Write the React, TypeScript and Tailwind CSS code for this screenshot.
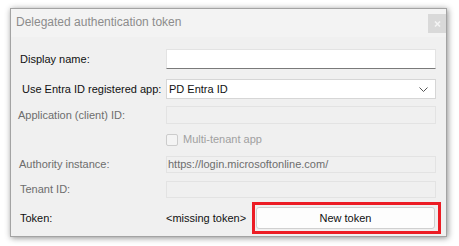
export default function App() {
  const font = { fontFamily: '"Liberation Sans", Arial, sans-serif' };
  return (
    <div className="w-[459px] h-[246px] bg-white pt-[8px] pl-[10px]" style={font}>
      <div className="w-[437px] h-[229px] border border-[#a3a3a3] bg-[#f0f0f0] shadow-[1px_1px_6px_rgba(0,0,0,0.45)] flex flex-col">
        {/* title bar */}
        <div className="h-[28px] bg-[#f3f3f3] flex items-start justify-between">
          <span className="pl-[5px] pt-[6px] text-[12px] leading-[14px] text-[#8c8c8c]">
            Delegated authentication token
          </span>
          <div className="mt-[5px] w-[18px] h-[19px] bg-[#d9d9d9] flex items-center justify-center">
            <svg width="7" height="6" viewBox="0 0 7 6">
              <path d="M1 0.5 L6 5.5 M6 0.5 L1 5.5" stroke="#f4f4f4" strokeWidth="1.6" />
            </svg>
          </div>
        </div>

        <div className="flex flex-col text-[11px] leading-[13px]">
          {/* display name */}
          <div className="mt-[12px] h-[20px] flex items-center">
            <span className="w-[155px] pl-[9px] text-[#111]">Display name:</span>
            <div className="w-[270px] h-[20px] bg-white border border-[#e3e3e3] border-b-[#7a7a7a]" />
          </div>
          {/* entra app */}
          <div className="mt-[10px] h-[20px] flex items-center">
            <span className="w-[155px] pl-[11px] text-[#111]">Use Entra ID registered app:</span>
            <div className="w-[270px] h-[20px] bg-white border border-[#d6d6d6] flex items-center justify-between pl-[2px] pr-[7px]">
              <span className="text-[#111]">PD Entra ID</span>
              <svg width="9" height="5" viewBox="0 0 9 5">
                <path d="M0.5 0.5 L4.5 4.5 L8.5 0.5" fill="none" stroke="#555" strokeWidth="1" />
              </svg>
            </div>
          </div>
          {/* application id */}
          <div className="mt-[7px] h-[18px] flex items-center">
            <span className="w-[155px] pl-[7px] text-[#6d6d6d]">Application (client) ID:</span>
            <div className="w-[270px] h-[18px] bg-[#f0f0f0] border border-[#e3e3e3]" />
          </div>
          {/* multi-tenant */}
          <div className="mt-[9px] h-[13px] flex items-center">
            <div className="ml-[155px] w-[12px] h-[12px] rounded-[2px] border border-[#cccccc] bg-[#f4f4f4]" />
            <span className="ml-[5px] text-[#a0a0a0]">Multi-tenant app</span>
          </div>
          {/* authority */}
          <div className="mt-[10px] h-[17px] flex items-center">
            <span className="w-[155px] pl-[8px] text-[#6d6d6d]">Authority instance:</span>
            <div className="w-[270px] h-[17px] bg-[#f0f0f0] border border-[#e3e3e3] flex items-center pl-[1px]">
              <span className="text-[#6d6d6d]">https://login.microsoftonline.com/</span>
            </div>
          </div>
          {/* tenant */}
          <div className="mt-[8px] h-[17px] flex items-center">
            <span className="w-[155px] pl-[9px] text-[#6d6d6d]">Tenant ID:</span>
            <div className="w-[270px] h-[17px] bg-[#f0f0f0] border border-[#e3e3e3]" />
          </div>
          {/* token */}
          <div className="mt-[4px] h-[32px] flex items-center">
            <span className="w-[155px] pl-[9px] text-[#111]">Token:</span>
            <span className="w-[86px] text-[#111]">&lt;missing token&gt;</span>
            <div className="w-[189px] h-[32px] border-[3px] border-[#ec1c24] pl-[1px] pr-[3px] py-[2px]">
              <div className="h-full rounded-[3px] border border-[#d0d0d0] bg-[#fdfdfd] flex items-center justify-center text-[#111]">
                New token
              </div>
            </div>
          </div>
        </div>
      </div>
    </div>
  );
}
